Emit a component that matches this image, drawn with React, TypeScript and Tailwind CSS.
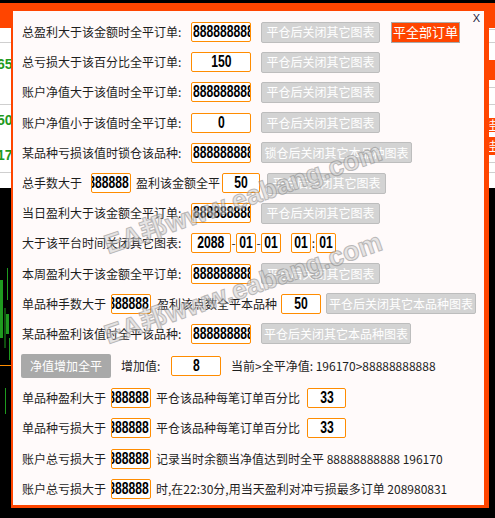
import React from 'react';

const cjk = "font-['Microsoft_YaHei','Noto_Sans_CJK_SC',sans-serif]";
const digits = "font-['Liberation_Sans',sans-serif]";

// orange-bordered edit box
function Field({ w, value, align = 'center' }: { w: string; value: string; align?: 'left' | 'center' | 'right' }) {
  const justify =
    align === 'left' ? 'justify-start pl-[1px]' : align === 'right' ? 'justify-end pr-[1px]' : 'justify-center';
  const origin = align === 'left' ? 'origin-left' : align === 'right' ? 'origin-right' : 'origin-center';
  return (
    <div className={`${w} h-[20px] shrink-0 flex items-center ${justify} overflow-hidden bg-white border border-[#ff8c00] rounded-[2px]`}>
      <span className={`${digits} ${origin} scale-x-[0.76] shrink-0 font-bold text-[16px] leading-none text-black whitespace-nowrap`}>
        {value}
      </span>
    </div>
  );
}

function GrayBtn({ w, children, className = '' }: { w: string; children: React.ReactNode; className?: string }) {
  return (
    <div className={`${w} ${className} h-[21px] shrink-0 flex items-center justify-center bg-[#d3d3d3] border border-[#bdbdbd] rounded-[2px] text-white text-[12px] whitespace-nowrap`}>
      {children}
    </div>
  );
}

function Row({ children, h = 'h-[30.2px]' }: { children: React.ReactNode; h?: string }) {
  return <div className={`flex items-center ${h}`}>{children}</div>;
}

function Label({ w, children, className = '' }: { w: string; children: React.ReactNode; className?: string }) {
  return <span className={`${w} ${className} shrink-0 whitespace-nowrap text-[12px] text-[#1e1e1e]`}>{children}</span>;
}

const BIG = '88888888888';

function Watermark({ top }: { top: string }) {
  return (
    <div
      className={`absolute left-[110px] ${top} origin-bottom-left -rotate-[19deg] whitespace-nowrap leading-none text-[27px] font-bold text-[#d6d6d6] opacity-60 [-webkit-text-stroke:1px_#8c8c8c] font-['Liberation_Sans','Noto_Sans_CJK_SC',sans-serif] pointer-events-none`}
    >
      EA邦www.eabang.com
    </div>
  );
}

export default function App() {
  return (
    <div className={`relative w-[495px] h-[518px] overflow-hidden bg-black ${cjk}`}>
      {/* chart window behind the panel */}
      <div className="flex flex-col h-full">
        <div className="h-[3px] bg-black" />
        <div className="h-[25px] bg-[#ff4500]" />
        <div className="h-[160px] bg-white flex justify-between">
          <div className="w-[12px] flex flex-col text-[#1f9a1f] font-bold text-[14px] leading-none font-['Liberation_Sans',sans-serif]">
            <div className="h-[15px] border-b border-[#cfcfcf]" />
            <div className="h-[62px] border-b border-[#cfcfcf] relative">
              <span className="absolute left-[-3px] top-[14px]">65</span>
            </div>
            <div className="h-[68px] border-b border-[#cfcfcf] relative">
              <span className="absolute left-[-3px] top-[8px]">50</span>
              <span className="absolute left-[-3px] top-[43px]">17</span>
            </div>
          </div>
          <div className="w-[10px] flex flex-col">
            <div className="h-[2px] border-b border-[#cfcfcf]" />
            <div className="h-[13px] border-b border-[#cfcfcf]" />
            <div className="h-[17px]" />
            <div className="h-[20px] bg-[#ff4500]" />
            <div className="h-[8px] border-b border-[#cfcfcf]" />
            <div className="h-[17px] border-b border-[#cfcfcf]" />
            <div className="h-[13px]" />
            <div className="h-[14px] bg-[#ff4500] text-white text-[12px] leading-[14px] overflow-hidden">挂</div>
            <div className="h-[5px]" />
            <div className="h-[18px] bg-[#ff4500] text-white text-[12px] leading-[18px] overflow-hidden">挂</div>
            <div className="h-[8px] border-b border-[#cfcfcf]" />
            <div className="h-[10px] border-b border-[#cfcfcf]" />
          </div>
        </div>
        <div className="flex-1">
          <svg width="495" height="330" viewBox="0 0 495 330">
            <rect x="0" y="92" width="3" height="58" fill="#1f9a1f" />
            <line x1="5" y1="120" x2="5" y2="160" stroke="#1f9a1f" strokeWidth="1" />
            <line x1="7.5" y1="80" x2="7.5" y2="112" stroke="#1f9a1f" strokeWidth="1" />
            <rect x="6" y="126" width="3" height="20" fill="#1f9a1f" />
            <line x1="9.5" y1="150" x2="9.5" y2="172" stroke="#1f9a1f" strokeWidth="1" />
            <line x1="5.5" y1="200" x2="5.5" y2="226" stroke="#1f9a1f" strokeWidth="1" />
            <line x1="0" y1="177.5" x2="12" y2="177.5" stroke="#ff8c00" strokeWidth="1" />
          </svg>
        </div>
      </div>

      {/* settings panel */}
      <div className="absolute left-[11px] top-[9px] w-[478px] h-[499px] bg-[#fffafa] border-[#ff4500] border-l-2 border-t-2 border-r-[5px] border-b-[3px] pl-[9px] pt-[6px]">
        <span className="absolute top-[2px] right-[4px] text-[11px] leading-none text-[#1b1b3c] font-['Liberation_Sans',sans-serif]">X</span>

        <Row>
          <Label w="w-[169px]">总盈利大于该金额时全平订单:</Label>
          <Field w="w-[60px]" value={BIG} align="left" />
          <GrayBtn w="w-[119px]" className="ml-[10px]">平仓后关闭其它图表</GrayBtn>
          <div className="ml-[11px] w-[69px] h-[21px] flex items-center justify-center bg-[#ff4500] border border-[#a9a9a9] text-white text-[13px] whitespace-nowrap">
            平全部订单
          </div>
        </Row>
        <Row>
          <Label w="w-[169px]">总亏损大于该百分比全平订单:</Label>
          <Field w="w-[60px]" value="150" />
          <GrayBtn w="w-[119px]" className="ml-[10px]">平仓后关闭其它图表</GrayBtn>
        </Row>
        <Row>
          <Label w="w-[169px]">账户净值大于该值时全平订单:</Label>
          <Field w="w-[60px]" value={BIG} align="left" />
          <GrayBtn w="w-[119px]" className="ml-[10px]">平仓后关闭其它图表</GrayBtn>
        </Row>
        <Row>
          <Label w="w-[169px]">账户净值小于该值时全平订单:</Label>
          <Field w="w-[60px]" value="0" />
          <GrayBtn w="w-[119px]" className="ml-[10px]">平仓后关闭其它图表</GrayBtn>
        </Row>
        <Row>
          <Label w="w-[169px]">某品种亏损该值时锁仓该品种:</Label>
          <Field w="w-[60px]" value={BIG} align="left" />
          <GrayBtn w="w-[151px]" className="ml-[10px]">锁仓后关闭其它本品种图表</GrayBtn>
        </Row>
        <Row>
          <Label w="w-[69px]">总手数大于</Label>
          <Field w="w-[40px]" value={BIG} align="right" />
          <Label w="w-[91px]" className="pl-[5px]">盈利该金额全平</Label>
          <Field w="w-[38px]" value="50" />
          <GrayBtn w="w-[119px]" className="ml-[7px]">平仓后关闭其它图表</GrayBtn>
        </Row>
        <Row>
          <Label w="w-[169px]">当日盈利大于该金额全平订单:</Label>
          <Field w="w-[60px]" value={BIG} align="left" />
          <GrayBtn w="w-[119px]" className="ml-[10px]">平仓后关闭其它图表</GrayBtn>
        </Row>
        <Row>
          <Label w="w-[169px]">大于该平台时间关闭其它图表:</Label>
          <Field w="w-[40px]" value="2088" />
          <span className="w-[5px] text-center text-[12px] text-[#1e1e1e]">-</span>
          <Field w="w-[20px]" value="01" />
          <span className="w-[5px] text-center text-[12px] text-[#1e1e1e]">-</span>
          <Field w="w-[20px]" value="01" />
          <div className="w-[10px]" />
          <Field w="w-[20px]" value="01" />
          <span className="w-[5px] text-center text-[12px] text-[#1e1e1e]">:</span>
          <Field w="w-[20px]" value="01" />
        </Row>
        <Row>
          <Label w="w-[169px]">本周盈利大于该金额全平订单:</Label>
          <Field w="w-[60px]" value={BIG} align="left" />
          <GrayBtn w="w-[119px]" className="ml-[10px]">平仓后关闭其它图表</GrayBtn>
        </Row>
        <Row>
          <Label w="w-[89px]">单品种手数大于</Label>
          <Field w="w-[40px]" value={BIG} align="right" />
          <Label w="w-[130px]" className="pl-[6px]">盈利该点数全平本品种</Label>
          <Field w="w-[40px]" value="50" />
          <GrayBtn w="w-[150px]" className="ml-[5px]">平仓后关闭其它本品种图表</GrayBtn>
        </Row>
        <Row>
          <Label w="w-[169px]">某品种盈利该值时全平该品种:</Label>
          <Field w="w-[60px]" value={BIG} align="left" />
          <GrayBtn w="w-[150px]" className="ml-[10px]">平仓后关闭其它本品种图表</GrayBtn>
        </Row>
        <Row h="h-[34px]">
          <div className="ml-[-1px] w-[90px] h-[24px] shrink-0 flex items-center justify-center bg-[#a9a9a9] rounded-[2px] text-white text-[12px]">
            净值增加全平
          </div>
          <Label w="w-[50px]" className="ml-[10px]">增加值:</Label>
          <Field w="w-[50px]" value="8" />
          <Label w="w-auto" className="ml-[10px]">当前&gt;全平净值: 196170&gt;88888888888</Label>
        </Row>
        <Row>
          <Label w="w-[89px]">单品种盈利大于</Label>
          <Field w="w-[40px]" value={BIG} align="right" />
          <Label w="w-[156px]" className="pl-[5px]">平仓该品种每笔订单百分比</Label>
          <Field w="w-[39px]" value="33" />
        </Row>
        <Row>
          <Label w="w-[89px]">单品种亏损大于</Label>
          <Field w="w-[40px]" value={BIG} align="right" />
          <Label w="w-[156px]" className="pl-[5px]">平仓该品种每笔订单百分比</Label>
          <Field w="w-[39px]" value="33" />
        </Row>
        <Row>
          <Label w="w-[89px]">账户总亏损大于</Label>
          <Field w="w-[40px]" value={BIG} align="right" />
          <Label w="w-auto" className="pl-[5px]">记录当时余额当净值达到时全平 88888888888 196170</Label>
        </Row>
        <Row>
          <Label w="w-[89px]">账户总亏损大于</Label>
          <Field w="w-[40px]" value={BIG} align="right" />
          <Label w="w-auto" className="pl-[5px]">时,在22:30分,用当天盈利对冲亏损最多订单 208980831</Label>
        </Row>
      </div>

      <Watermark top="top-[232px]" />
      <Watermark top="top-[322px]" />
    </div>
  );
}
